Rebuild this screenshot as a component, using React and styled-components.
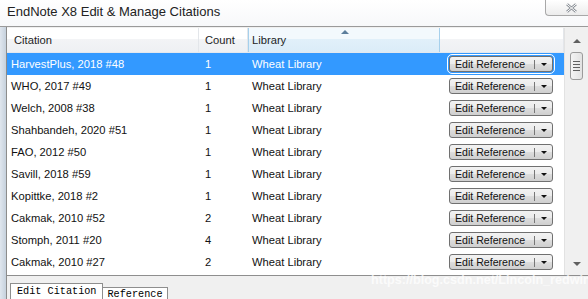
import React from "react";
import styled, { createGlobalStyle } from "styled-components";

const GlobalStyle = createGlobalStyle`
  html, body {
    margin: 0;
    padding: 0;
    width: 588px;
    height: 299px;
    overflow: hidden;
    background: #f0f0f0;
    font-family: "Liberation Sans", Arial, sans-serif;
  }
`;

const Window = styled.div`
  position: relative;
  width: 588px;
  height: 299px;
  display: flex;
  flex-direction: column;
  background: #f0f0f0;
  overflow: hidden;
`;

const TitleBar = styled.div`
  height: 27px;
  flex: none;
  display: flex;
  align-items: flex-start;
  justify-content: space-between;
  background: linear-gradient(#ffffff, #f7f8fa);
  border-bottom: 1px solid #9a9a9a;
  box-sizing: border-box;
`;

const Title = styled.div`
  padding: 4px 0 0 7px;
  font-size: 13px;
  color: #222222;
`;

const CloseButton = styled.div`
  width: 43px;
  height: 16px;
  box-sizing: border-box;
  border: 1px solid #a8a8a8;
  border-top: none;
  border-right: none;
  border-bottom-left-radius: 4px;
  background: linear-gradient(#ffffff, #ececec);
  display: flex;
  align-items: center;
  justify-content: center;
  padding-left: 8px;
`;

const Body = styled.div`
  flex: 1;
  display: flex;
`;

const Frame = styled.div`
  width: 6px;
  flex: none;
  background: linear-gradient(90deg, #dfe6ee, #c6d1dd);
  border-right: 1px solid #8c8c8c;
`;

const Panel = styled.div`
  flex: 1;
  display: flex;
  flex-direction: column;
  padding-top: 1px;
`;

const ListArea = styled.div`
  height: 247px;
  display: flex;
  background: #ffffff;
  border-bottom: 1px solid #8e8e8e;
`;

const Table = styled.div`
  flex: 1;
  display: flex;
  flex-direction: column;
`;

const columns = "192px 49px 192px 1fr";

const HeaderRow = styled.div`
  display: grid;
  grid-template-columns: ${columns};
  height: 24px;
  border-bottom: 1px solid #e4e8ee;
`;

const HeaderCell = styled.div`
  position: relative;
  display: flex;
  align-items: center;
  padding-left: ${(p) => p.$pad || 6}px;
  font-size: 11.2px;
  color: #1e1e1e;
  background: ${(p) =>
    p.$sorted
      ? "linear-gradient(#f3f9fd 0%, #f3f9fd 45%, #e1f0fa 45%, #dbecf8 100%)"
      : "linear-gradient(#ffffff 0%, #ffffff 45%, #f3f4f6 45%, #eef0f3 100%)"};
  border-right: 1px solid ${(p) => (p.$sorted ? "#a6d0ec" : "#e3e6ea")};
  border-left: ${(p) => (p.$sorted ? "1px solid #a6d0ec" : "none")};
`;

const SortArrow = styled.div`
  position: absolute;
  top: 2px;
  left: 92px;
  width: 0;
  height: 0;
  border-left: 4px solid transparent;
  border-right: 4px solid transparent;
  border-bottom: 4px solid #5c7e9c;
`;

const Row = styled.div`
  display: grid;
  grid-template-columns: ${columns};
  height: 22px;
  align-items: center;
  font-size: 11.2px;
  color: ${(p) => (p.$selected ? "#ffffff" : "#111111")};
  background: ${(p) => (p.$selected ? "#3399ff" : "transparent")};
`;

const Cell = styled.div`
  padding-left: ${(p) => p.$pad}px;
  white-space: nowrap;
`;

const ActionCell = styled.div`
  display: flex;
  padding-left: 9px;
`;

const RefButton = styled.div`
  width: 104px;
  height: 16px;
  box-sizing: border-box;
  display: flex;
  align-items: center;
  border: 1px solid #707070;
  border-radius: 3px;
  background: linear-gradient(#f2f2f2 0%, #ebebeb 50%, #dddddd 50%, #cfcfcf 100%);
  color: #111111;
  font-size: 10.6px;
  outline: ${(p) => (p.$focused ? "1px solid #ffffff" : "none")};
  outline-offset: 1px;
`;

const RefLabel = styled.span`
  padding-left: 5px;
  flex: 1;
  white-space: nowrap;
`;

const Divider = styled.span`
  width: 1px;
  height: 9px;
  background: #777777;
`;

const DropArrow = styled.span`
  width: 0;
  height: 0;
  margin: 0 5px 0 6px;
  border-left: 3.5px solid transparent;
  border-right: 3.5px solid transparent;
  border-top: 3.5px solid #111111;
`;

const ScrollBar = styled.div`
  width: 24px;
  flex: none;
  display: flex;
  flex-direction: column;
  align-items: center;
  background: #f0f0f0;
  border-left: 1px solid #e2e2e2;
  padding-top: 11px;
  box-sizing: border-box;
`;

const ScrollArrow = styled.div`
  width: 0;
  height: 0;
  border-left: 4px solid transparent;
  border-right: 4px solid transparent;
  ${(p) =>
    p.$down
      ? "border-top: 4px solid #606060; margin-top: auto; margin-bottom: 9px;"
      : "border-bottom: 4px solid #606060;"}
`;

const Thumb = styled.div`
  margin-top: 9px;
  width: 13px;
  height: 28px;
  box-sizing: border-box;
  border: 1px solid #9b9b9b;
  border-radius: 3px;
  background: linear-gradient(90deg, #f4f4f4, #e2e2e2);
  display: flex;
  flex-direction: column;
  align-items: center;
  justify-content: center;
  gap: 2px;
`;

const Grip = styled.div`
  width: 7px;
  height: 1px;
  background: #606060;
`;

const TabStrip = styled.div`
  flex: 1;
  display: flex;
  align-items: flex-end;
  padding-left: 3px;
`;

const Tab = styled.div`
  box-sizing: border-box;
  height: ${(p) => (p.$active ? 16 : 12)}px;
  padding: ${(p) => (p.$active ? "2px 6px 0 6px" : "1px 4px 0 4px")};
  background: #ffffff;
  border: 1px solid #8e8e8e;
  border-bottom: none;
  margin-left: ${(p) => (p.$active ? 0 : -1)}px;
  font-family: "Liberation Mono", "Courier New", monospace;
  font-size: 10.2px;
  color: #000000;
  white-space: nowrap;
  overflow: hidden;
`;

const Watermark = styled.div`
  position: absolute;
  left: 371px;
  top: 273px;
  font-size: 12.6px;
  font-weight: bold;
  color: rgba(255, 255, 255, 0.75);
  white-space: nowrap;
  pointer-events: none;
`;

const citations = [
  ["HarvestPlus, 2018 #48", 1],
  ["WHO, 2017 #49", 1],
  ["Welch, 2008 #38", 1],
  ["Shahbandeh, 2020 #51", 1],
  ["FAO, 2012 #50", 1],
  ["Savill, 2018 #59", 1],
  ["Kopittke, 2018 #2", 1],
  ["Cakmak, 2010 #52", 2],
  ["Stomph, 2011 #20", 4],
  ["Cakmak, 2010 #27", 2],
];

export default function App() {
  return (
    <>
      <GlobalStyle />
      <Window>
        <TitleBar>
          <Title>EndNote X8 Edit &amp; Manage Citations</Title>
          <CloseButton>
            <svg width="13" height="10" viewBox="0 0 13 10">
              <path
                d="M2 1.2 L11 8.8 M11 1.2 L2 8.8"
                stroke="#8a8f96"
                strokeWidth="2.6"
                fill="none"
              />
              <path
                d="M2 1.2 L11 8.8 M11 1.2 L2 8.8"
                stroke="#ffffff"
                strokeWidth="1"
                fill="none"
              />
            </svg>
          </CloseButton>
        </TitleBar>
        <Body>
          <Frame />
          <Panel>
            <ListArea>
              <Table>
                <HeaderRow>
                  <HeaderCell $pad={7}>Citation</HeaderCell>
                  <HeaderCell>Count</HeaderCell>
                  <HeaderCell $sorted $pad={3}>
                    Library
                    <SortArrow />
                  </HeaderCell>
                  <HeaderCell />
                </HeaderRow>
                {citations.map(([name, count], i) => (
                  <Row key={name} $selected={i === 0}>
                    <Cell $pad={4}>{name}</Cell>
                    <Cell $pad={6}>{count}</Cell>
                    <Cell $pad={4}>Wheat Library</Cell>
                    <ActionCell>
                      <RefButton $focused={i === 0}>
                        <RefLabel>Edit Reference</RefLabel>
                        <Divider />
                        <DropArrow />
                      </RefButton>
                    </ActionCell>
                  </Row>
                ))}
              </Table>
              <ScrollBar>
                <ScrollArrow />
                <Thumb>
                  <Grip />
                  <Grip />
                  <Grip />
                  <Grip />
                </Thumb>
                <ScrollArrow $down />
              </ScrollBar>
            </ListArea>
            <TabStrip>
              <Tab $active>Edit Citation</Tab>
              <Tab>Reference</Tab>
            </TabStrip>
          </Panel>
        </Body>
        <Watermark>https://blog.csdn.net/Lincoln_redwine</Watermark>
      </Window>
    </>
  );
}
